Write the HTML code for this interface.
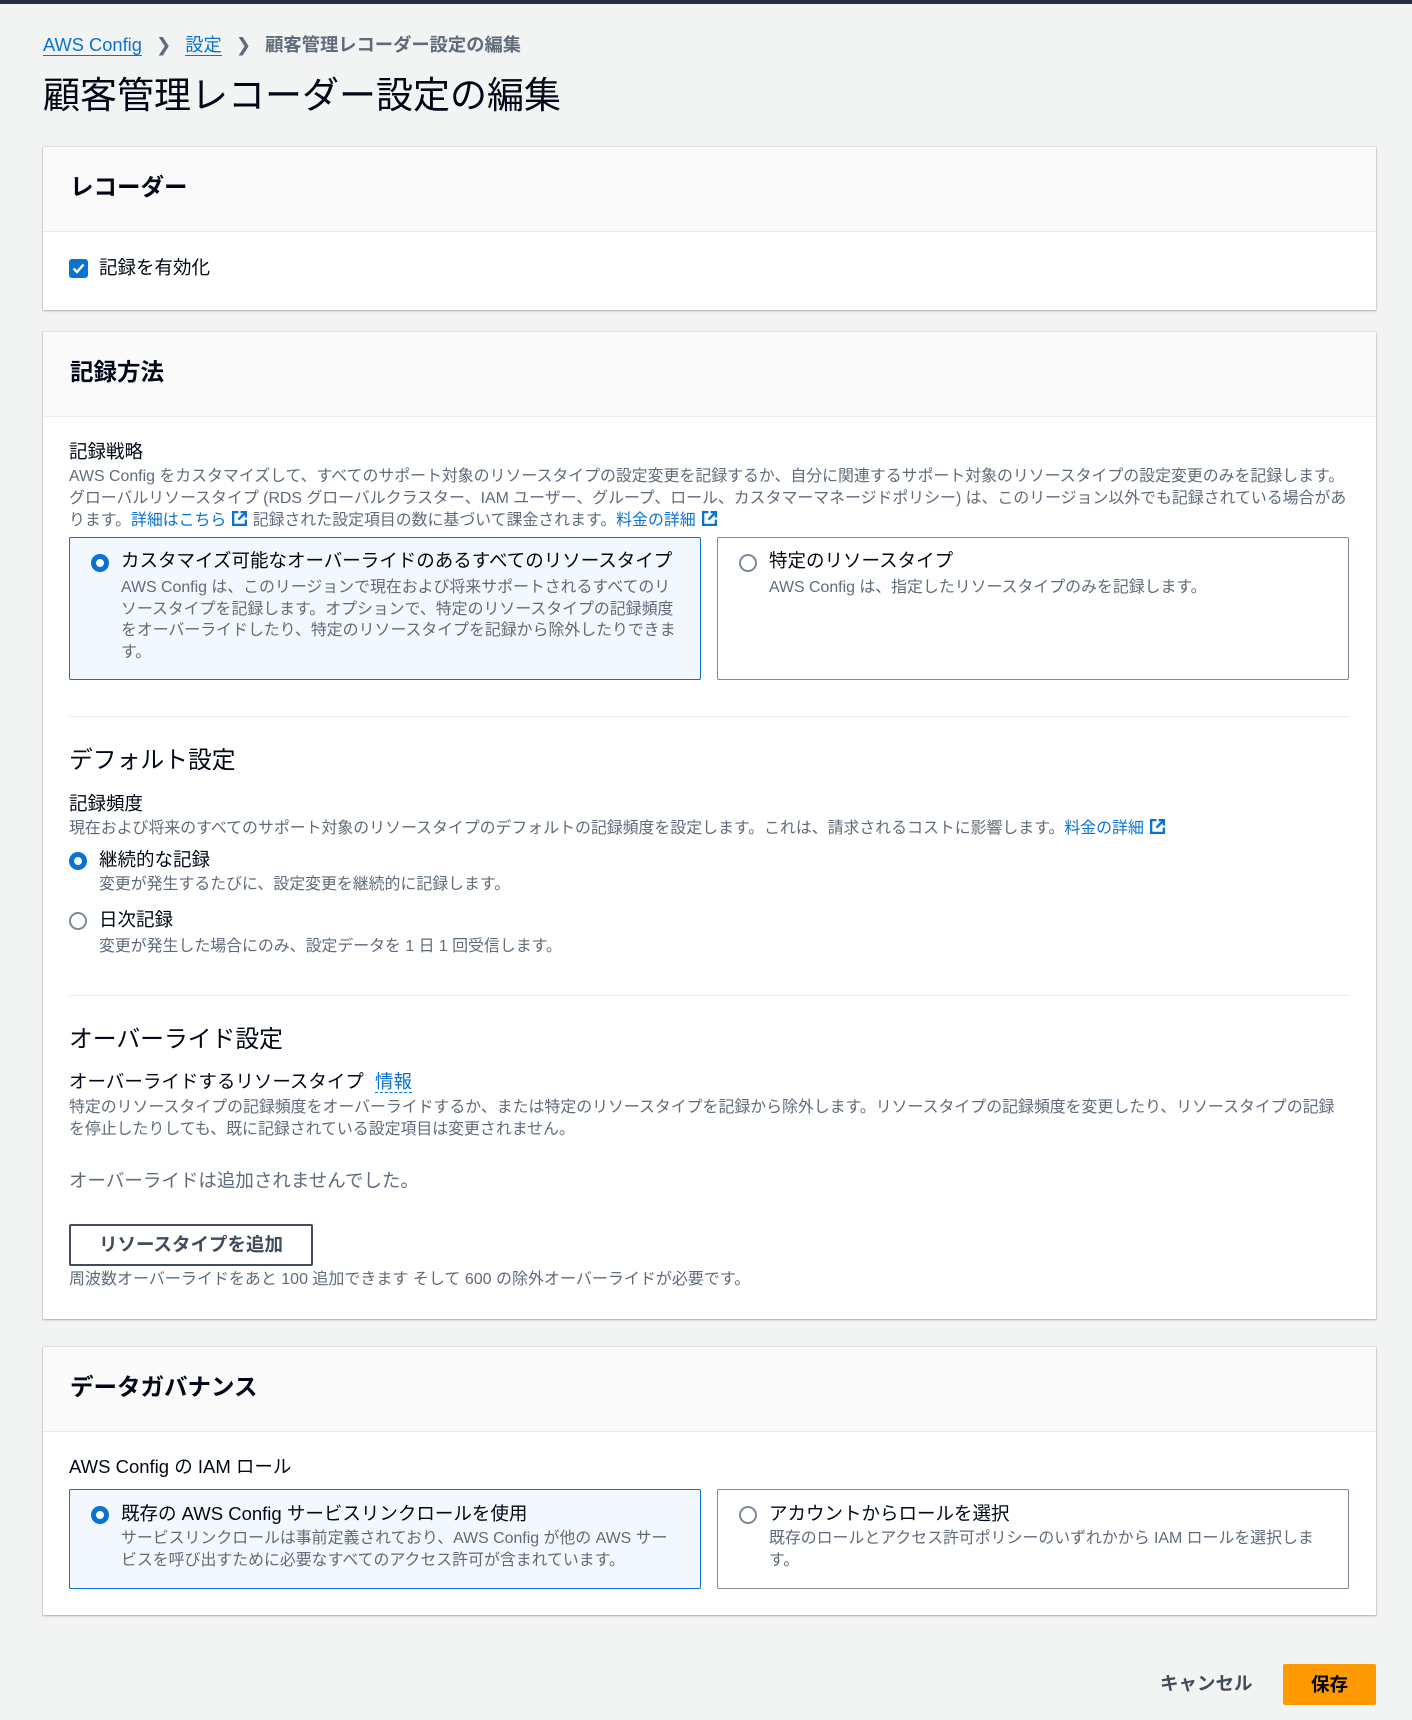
<!DOCTYPE html>
<html><head><meta charset="utf-8"><style>
*{box-sizing:border-box;margin:0;padding:0}
body{width:1412px;height:1720px;background:#f2f3f3;font-family:"Liberation Sans","Noto Sans CJK JP",sans-serif;color:#000716;position:relative;overflow:hidden;font-size:15.9px}
.a{position:absolute;white-space:nowrap;line-height:22px}
.top{position:absolute;left:0;top:0;width:1412px;height:4px;background:#232f3e}
.panel{position:absolute;left:43px;width:1333px;background:#fff;box-shadow:0 1px 2px rgba(0,7,22,.25),0 0 0 1px rgba(0,7,22,.06)}
.ph{height:85px;background:#fafafa;border-bottom:1px solid #e9ebed;padding:0 27px;font-weight:bold;font-size:23.5px;line-height:80px}
.d{color:#5f6b7a}
.lk{color:#0972d3}
.l{font-size:18.5px}
.tile{position:absolute;border:1px solid #7d8998;border-radius:2px;background:#fff}
.tile.s{border:1px solid #0972d3;background:#f2f8fd}
.rad{position:absolute;width:18px;height:18px;border-radius:50%;border:2px solid #7d8998;background:#fff}
.rad.on{border:5px solid #0972d3}
.h2{font-size:23.8px;line-height:28px}
.hr{position:absolute;left:69px;width:1279px;height:1px;background:#e9ebed}
.ext{display:inline-block;width:17px;height:17px;vertical-align:-2px;margin-left:5px}
</style></head><body>
<div class="top"></div>
<div class="a" style="left:43px;top:34px;font-size:18.3px"><span class="lk" style="border-bottom:1.5px solid #0972d3">AWS Config</span><span style="color:#5f6b7a;margin:0 14px">&#x276F;</span><span class="lk" style="border-bottom:1.5px solid #0972d3">設定</span><span style="color:#5f6b7a;margin:0 14px">&#x276F;</span><span style="color:#5f6b7a;font-weight:bold">顧客管理レコーダー設定の編集</span></div>
<div class="a" style="left:43px;top:72px;font-size:37px;line-height:48px">顧客管理レコーダー設定の編集</div>

<div class="panel" style="top:147px;height:163px">
<div class="ph">レコーダー</div>
</div>
<div style="position:absolute;left:69px;top:259px;width:19px;height:19px;background:#0972d3;border-radius:3px"><svg width="19" height="19" viewBox="0 0 19 19"><path d="M4.5 9.5l3.5 3.5 6.5-7.5" stroke="#fff" stroke-width="2.4" fill="none"/></svg></div>
<div class="a l" style="left:99px;top:257px">記録を有効化</div>

<div class="panel" style="top:332px;height:987px">
<div class="ph">記録方法</div>
</div>
<div class="a l" style="left:69px;top:441px">記録戦略</div>
<div class="a d" style="left:69px;top:466px">AWS Config をカスタマイズして、すべてのサポート対象のリソースタイプの設定変更を記録するか、自分に関連するサポート対象のリソースタイプの設定変更のみを記録します。</div>
<div class="a d" style="left:69px;top:488px">グローバルリソースタイプ (RDS グローバルクラスター、IAM ユーザー、グループ、ロール、カスタマーマネージドポリシー) は、このリージョン以外でも記録されている場合があ</div>
<div class="a d" style="left:69px;top:510px">ります。<span class="lk">詳細はこちら<svg class="ext" viewBox="0 0 16 16"><path d="M7 2H2v12h12V9M9 2h5v5M14 2L7 9" stroke="#0972d3" stroke-width="2.2" fill="none"/></svg></span> 記録された設定項目の数に基づいて課金されます。<span class="lk">料金の詳細<svg class="ext" viewBox="0 0 16 16"><path d="M7 2H2v12h12V9M9 2h5v5M14 2L7 9" stroke="#0972d3" stroke-width="2.2" fill="none"/></svg></span></div>

<div class="tile s" style="left:69px;top:537px;width:632px;height:143px"></div>
<div class="rad on" style="left:91px;top:554px"></div>
<div class="a l" style="left:121px;top:550px">カスタマイズ可能なオーバーライドのあるすべてのリソースタイプ</div>
<div class="a d" style="left:121px;top:577px;line-height:21.5px;white-space:normal;width:560px">AWS Config は、このリージョンで現在および将来サポートされるすべてのリソースタイプを記録します。オプションで、特定のリソースタイプの記録頻度をオーバーライドしたり、特定のリソースタイプを記録から除外したりできます。</div>
<div class="tile" style="left:717px;top:537px;width:632px;height:143px"></div>
<div class="rad" style="left:739px;top:554px"></div>
<div class="a l" style="left:769px;top:550px">特定のリソースタイプ</div>
<div class="a d" style="left:769px;top:577px">AWS Config は、指定したリソースタイプのみを記録します。</div>

<div class="hr" style="top:716px"></div>
<div class="a h2" style="left:69px;top:747px">デフォルト設定</div>
<div class="a l" style="left:69px;top:793px">記録頻度</div>
<div class="a d" style="left:69px;top:818px">現在および将来のすべてのサポート対象のリソースタイプのデフォルトの記録頻度を設定します。これは、請求されるコストに影響します。<span class="lk">料金の詳細<svg class="ext" viewBox="0 0 16 16"><path d="M7 2H2v12h12V9M9 2h5v5M14 2L7 9" stroke="#0972d3" stroke-width="2.2" fill="none"/></svg></span></div>
<div class="rad on" style="left:69px;top:852px"></div>
<div class="a l" style="left:99px;top:849px">継続的な記録</div>
<div class="a d" style="left:99px;top:874px">変更が発生するたびに、設定変更を継続的に記録します。</div>
<div class="rad" style="left:69px;top:912px"></div>
<div class="a l" style="left:99px;top:909px">日次記録</div>
<div class="a d" style="left:99px;top:936px">変更が発生した場合にのみ、設定データを 1 日 1 回受信します。</div>

<div class="hr" style="top:995px"></div>
<div class="a h2" style="left:69px;top:1026px">オーバーライド設定</div>
<div class="a l" style="left:69px;top:1071px">オーバーライドするリソースタイプ <span class="lk" style="margin-left:6px;border-bottom:1px dashed #0972d3">情報</span></div>
<div class="a d" style="left:69px;top:1097px">特定のリソースタイプの記録頻度をオーバーライドするか、または特定のリソースタイプを記録から除外します。リソースタイプの記録頻度を変更したり、リソースタイプの記録</div>
<div class="a d" style="left:69px;top:1119px">を停止したりしても、既に記録されている設定項目は変更されません。</div>
<div class="a d l" style="left:69px;top:1170px">オーバーライドは追加されませんでした。</div>
<div style="position:absolute;left:69px;top:1224px;width:244px;height:42px;border:2px solid #414d5c;border-radius:2px;background:#fff;text-align:center;line-height:38px;font-weight:bold;font-size:18.5px;color:#414d5c">リソースタイプを追加</div>
<div class="a d" style="left:69px;top:1269px;font-size:16px">周波数オーバーライドをあと 100 追加できます そして 600 の除外オーバーライドが必要です。</div>

<div class="panel" style="top:1347px;height:268px">
<div class="ph">データガバナンス</div>
</div>
<div class="a l" style="left:69px;top:1456px">AWS Config の IAM ロール</div>
<div class="tile s" style="left:69px;top:1489px;width:632px;height:100px"></div>
<div class="rad on" style="left:91px;top:1506px"></div>
<div class="a l" style="left:121px;top:1503px">既存の AWS Config サービスリンクロールを使用</div>
<div class="a d" style="left:121px;top:1528px;line-height:21.5px;white-space:normal;width:552px">サービスリンクロールは事前定義されており、AWS Config が他の AWS サービスを呼び出すために必要なすべてのアクセス許可が含まれています。</div>
<div class="tile" style="left:717px;top:1489px;width:632px;height:100px"></div>
<div class="rad" style="left:739px;top:1506px"></div>
<div class="a l" style="left:769px;top:1503px">アカウントからロールを選択</div>
<div class="a d" style="left:769px;top:1528px;line-height:21.5px;white-space:normal;width:552px">既存のロールとアクセス許可ポリシーのいずれかから IAM ロールを選択します。</div>

<div class="a" style="left:1160px;top:1673px;font-size:18.5px;font-weight:bold;color:#414d5c">キャンセル</div>
<div style="position:absolute;left:1283px;top:1664px;width:93px;height:41px;background:#ff9900;border-radius:2px;text-align:center;line-height:41px;font-weight:bold;font-size:18.5px;color:#000716">保存</div>
</body></html>
